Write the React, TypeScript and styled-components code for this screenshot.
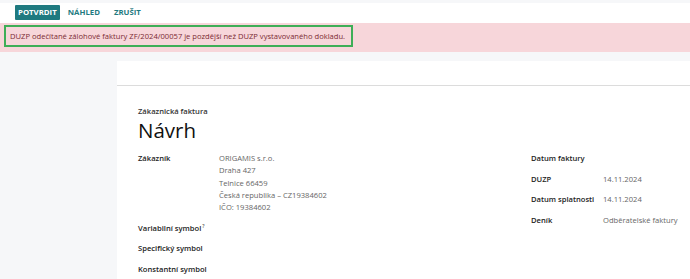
import React from "react";
import styled, { createGlobalStyle } from "styled-components";

const Global = createGlobalStyle`
  html, body { margin: 0; padding: 0; background: #f6f7f9; }
  body { font-family: "Open Sans", "Noto Sans", sans-serif; color: #222; }
  * { box-sizing: border-box; }
`;

const Page = styled.div`
  width: 690px;
  height: 279px;
  overflow: hidden;
  display: flex;
  flex-direction: column;
  background: #f6f7f9;
`;

const Toolbar = styled.div`
  margin-top: 3px;
  height: 20px;
  background: #fff;
  display: flex;
  align-items: center;
  padding-left: 15px;
`;

const ToolButton = styled.button<{ $primary?: boolean }>`
  border: none;
  font-family: inherit;
  font-weight: 700;
  font-size: 7.8px;
  height: 15px;
  padding: 0 ${(p) => (p.$primary ? "3px" : "7px")};
  margin-right: ${(p) => (p.$primary ? "1px" : "0")};
  background: ${(p) => (p.$primary ? "#1f7a80" : "transparent")};
  color: ${(p) => (p.$primary ? "#fff" : "#1f7a80")};
  border-radius: 1px;
  cursor: pointer;
  line-height: 15px;
`;

const AlertBand = styled.div`
  height: 30px;
  background: #f7d6da;
  padding: 2px 0 0 4px;
`;

const AlertBox = styled.div`
  width: 349px;
  height: 22px;
  border: 2px solid #3fae57;
  display: flex;
  align-items: center;
  padding-left: 4px;
  font-size: 7.6px;
  color: #7b2b33;
  white-space: nowrap;
`;

const Content = styled.div`
  flex: 1;
  padding: 9px 0 0 117px;
  display: flex;
`;

const Sheet = styled.div`
  flex: 1;
  background: #fff;
  display: flex;
  flex-direction: column;
`;

const SheetHeader = styled.div`
  height: 25px;
  border-bottom: 1px solid #dcdcdc;
`;

const SheetBody = styled.div`
  padding: 19px 0 0 21px;
`;

const Kind = styled.div`
  font-size: 7.6px;
  font-weight: 600;
  line-height: 12px;
  color: #333;
`;

const Title = styled.h1`
  margin: 0;
  font-size: 20.5px;
  font-weight: 500;
  line-height: 26px;
  color: #111;
`;

const Groups = styled.div`
  margin-top: 5px;
  display: grid;
  grid-template-columns: 393px 1fr;
`;

const FieldGrid = styled.div<{ $label: number; $pad: number }>`
  display: grid;
  grid-template-columns: ${(p) => p.$label}px 1fr;
  align-content: start;
  & > div {
    padding: ${(p) => p.$pad}px 0;
  }
`;

const Label = styled.div`
  font-size: 7.6px;
  font-weight: 600;
  color: #222;
  line-height: 12.3px;
  white-space: nowrap;
`;

const Value = styled.div`
  font-size: 7.6px;
  color: #666;
  line-height: 12.3px;
  white-space: nowrap;
`;

const Sup = styled.sup`
  font-size: 5px;
  color: #555;
  margin-left: 1px;
  line-height: 0;
  vertical-align: baseline;
  position: relative;
  top: -3px;
`;

export default function App() {
  return (
    <Page>
      <Global />
      <Toolbar>
        <ToolButton $primary>POTVRDIT</ToolButton>
        <ToolButton>NÁHLED</ToolButton>
        <ToolButton>ZRUŠIT</ToolButton>
      </Toolbar>
      <AlertBand>
        <AlertBox>
          DUZP odečítané zálohové faktury ZF/2024/00057 je pozdější než DUZP vystavovaného dokladu.
        </AlertBox>
      </AlertBand>
      <Content>
        <Sheet>
          <SheetHeader />
          <SheetBody>
            <Kind>Zákaznická faktura</Kind>
            <Title>Návrh</Title>
            <Groups>
              <FieldGrid $label={81} $pad={4.1}>
                <Label>Zákazník</Label>
                <Value>
                  ORIGAMIS s.r.o.
                  <br />
                  Draha 427
                  <br />
                  Telnice 66459
                  <br />
                  Česká republika – CZ19384602
                  <br />
                  IČO: 19384602
                </Value>
                <Label>
                  Variabilní symbol<Sup>?</Sup>
                </Label>
                <Value />
                <Label>Specifický symbol</Label>
                <Value />
                <Label>Konstantní symbol</Label>
                <Value />
              </FieldGrid>
              <FieldGrid $label={72} $pad={4.2}>
                <Label>Datum faktury</Label>
                <Value />
                <Label>DUZP</Label>
                <Value>14.11.2024</Value>
                <Label>Datum splatnosti</Label>
                <Value>14.11.2024</Value>
                <Label>Deník</Label>
                <Value>Odběratelské faktury</Value>
              </FieldGrid>
            </Groups>
          </SheetBody>
        </Sheet>
      </Content>
    </Page>
  );
}
